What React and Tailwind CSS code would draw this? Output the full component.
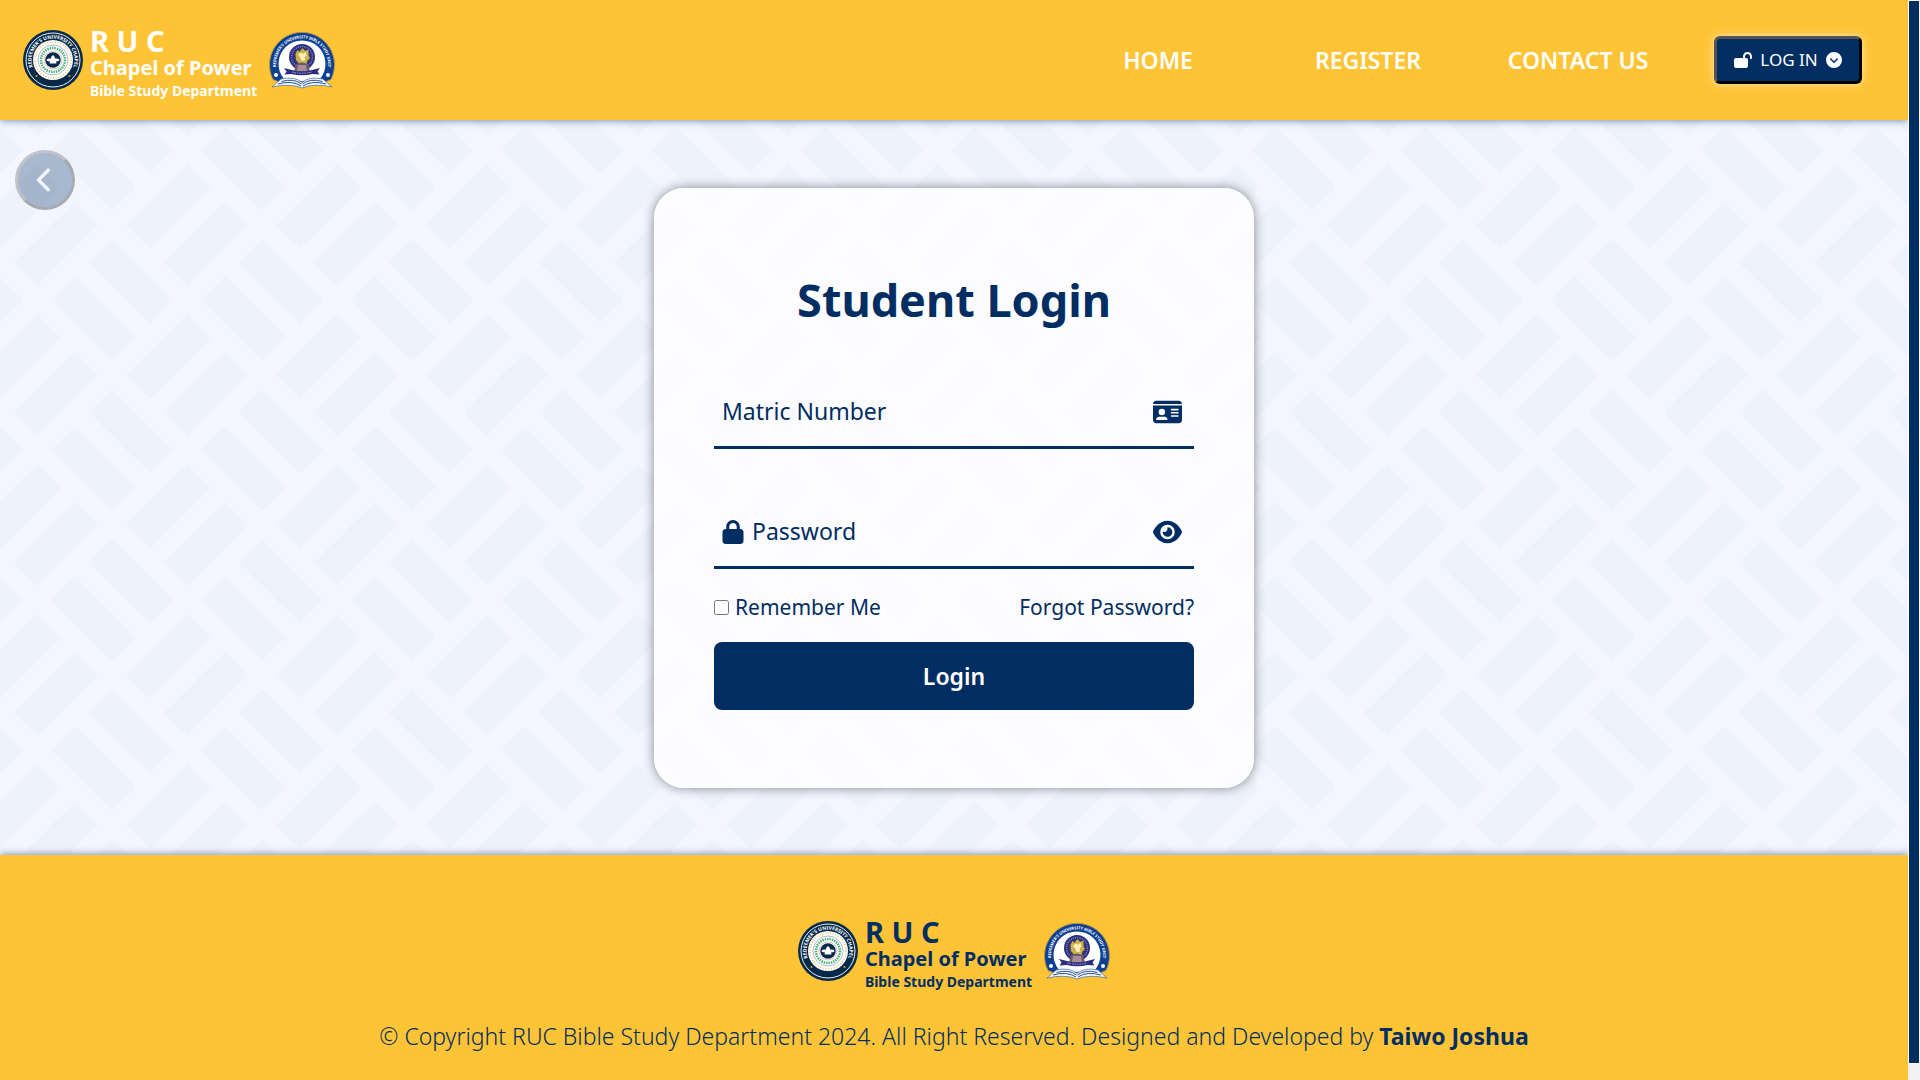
import { FaLockOpen, FaCircleChevronDown, FaChevronLeft, FaIdCard, FaLock, FaEye } from "react-icons/fa6";

const BRICKS = [
  [[75, 81.5], [98.5, 105], [37.5, 166], [13.5, 142.5]],
  [[37.5, 44], [61, 67.5], [0, 128.5], [-24, 105]],
  [[112.5, 119], [173.5, 180], [150, 203.5], [88.5, 142.5]],
  [[75, 156.5], [136, 217.5], [112.5, 241], [51, 180]],
];
const SHIFTS = [-150, 0, 150];

function BrickBackground() {
  return (
    <svg className="absolute inset-0 h-full w-full" aria-hidden="true">
      <defs>
        <pattern id="bricks" width="150" height="150" patternUnits="userSpaceOnUse">
          {BRICKS.map((pts, i) =>
            SHIFTS.map((dx) =>
              SHIFTS.map((dy) => (
                <polygon
                  key={`${i}:${dx}:${dy}`}
                  points={pts.map(([x, y]) => `${x + dx},${y + dy}`).join(" ")}
                  fill="#eef2fa"
                />
              ))
            )
          )}
        </pattern>
      </defs>
      <rect width="100%" height="100%" fill="url(#bricks)" />
    </svg>
  );
}

function ChapelSeal({ id }) {
  return (
    <svg viewBox="0 0 120 120" className="size-15 shrink-0" role="img" aria-label="Redeemer's University Chapel seal">
      <defs>
        <path id={`${id}-ring`} d="M29.6 90.4 A43 43 0 1 1 90.4 90.4" />
      </defs>
      <circle cx="60" cy="60" r="60" fill="#06294a" />
      <circle cx="60" cy="60" r="54" fill="none" stroke="#e8eef4" strokeWidth="2" />
      <circle cx="60" cy="60" r="40" fill="#fff" />
      <circle cx="60" cy="60" r="36" fill="none" stroke="#e3c66a" strokeWidth="3" strokeDasharray="2.2 3.2" />
      <circle cx="60" cy="60" r="30" fill="none" stroke="#8b98ab" strokeWidth="1.4" />
      <circle cx="60" cy="60" r="24" fill="none" stroke="#4bb47f" strokeWidth="5" strokeDasharray="3 1.8" />
      <circle cx="60" cy="60" r="18" fill="none" stroke="#d79a9c" strokeWidth="1.2" />
      <text fill="#fff" fontSize="10" fontWeight="700">
        <textPath href={`#${id}-ring`} startOffset="50%" textAnchor="middle">REDEEMER'S UNIVERSITY CHAPEL</textPath>
      </text>
      <circle cx="27" cy="92" r="2.2" fill="#c9a227" />
      <circle cx="93" cy="92" r="2.2" fill="#c9a227" />
      <circle cx="60" cy="60" r="15.5" fill="#06294a" />
      <path d="M47 61 q0 -4 5 -4 l4 0 q-1 -4 4 -7 q5 3 4 7 l4 0 q5 0 5 4 q-3 2 -7 2 l1 4 h-14 l1 -4 q-4 0 -7 -2z" fill="#fff" />
    </svg>
  );
}

function UnitCrest({ id }) {
  return (
    <svg viewBox="0 0 132 116" className="h-[58px] w-[66px] shrink-0" role="img" aria-label="Redeemer's University Bible Study Unit crest">
      <defs>
        <path id={`${id}-arc`} d="M17 84 A52 52 0 1 1 115 84" />
      </defs>
      <path d="M8 97 A65 65 0 1 1 124 97 L112 102 H20 Z" fill="#0d3f92" stroke="#b8973a" strokeWidth="2" />
      <path d="M30 96 A47 47 0 1 1 102 96 L66 100 Z" fill="#fff" />
      <text fill="#fff" fontSize="8" fontWeight="700">
        <textPath href={`#${id}-arc`} startOffset="50%" textAnchor="middle">REDEEMER'S UNIVERSITY BIBLE STUDY UNIT</textPath>
      </text>
      <circle cx="14" cy="88" r="4" fill="#fff" />
      <circle cx="118" cy="88" r="4" fill="#fff" />
      <circle cx="66" cy="52" r="26" fill="#2c2c80" />
      <circle cx="66" cy="52" r="21" fill="none" stroke="#8f8fc4" strokeWidth="3" strokeDasharray="2 2.5" />
      <circle cx="66" cy="52" r="17" fill="#3a3f66" />
      <path d="M54 58 L53 46 L57 38 L61 42 L67 34 L72 40 L79 37 L79 49 L82 54 L76 60 L76 67 L62 67 Z" fill="#cdb14a" />
      <path d="M58 47 l6 -4 4 3 5 -5 2 8 -4 4 2 6 -8 1 -2 -6z" fill="#fbf0b6" />
      <path d="M53 66 L66 63 L79 66 L82 84 H50 Z" fill="#70566b" />
      <path d="M58 68 H74 L76 80 H56 Z" fill="#a58d9c" />
      <path d="M30 74 l16 4 q20 6 40 0 l16 -4 -5 7 4 6 -14 -1 q-21 5 -42 0 l-14 1 4 -6z" fill="#2c2c80" />
      <path d="M46 82 q20 5 40 0" fill="none" stroke="#a9a9d6" strokeWidth="2" strokeDasharray="3 2" />
      <path d="M6 112 L24 96 Q52 90 66 103 Q80 90 108 96 L126 112 Q90 104 66 114 Q42 104 6 112Z" fill="#f6f9ff" stroke="#3a64a0" strokeWidth="1.4" />
      <path d="M18 106 Q46 98 64 110 M25 101 Q50 94 65 106 M114 106 Q86 98 68 110 M107 101 Q82 94 67 106" fill="none" stroke="#24518f" strokeWidth="2" />
    </svg>
  );
}

function Brand({ id }) {
  return (
    <div className="flex items-center">
      <ChapelSeal id={`${id}-seal`} />
      <div className="ml-[7px] flex flex-col pt-2 font-bold">
        <span className="text-[29px] leading-7">R U C</span>
        <span className="text-[20px] leading-[26px]">Chapel of Power</span>
        <span className="text-[14px] leading-5">Bible Study Department</span>
      </div>
      <div className="ml-3">
        <UnitCrest id={`${id}-crest`} />
      </div>
    </div>
  );
}

function Header() {
  return (
    <header className="relative z-10 flex h-30 items-center justify-between bg-[#ffc436] pr-[46px] pl-[23px] text-white shadow-[0_0_8px_rgba(0,45,98,0.6)]">
      <Brand id="top" />
      <div className="flex items-center gap-[31px]">
        <nav className="grid grid-cols-[210px_210px_210px] text-center text-[23px] font-semibold">
          <a href="#home">HOME</a>
          <a href="#register">REGISTER</a>
          <a href="#contact">CONTACT US</a>
        </nav>
        <button
          type="button"
          className="flex h-12 w-[148px] items-center justify-center gap-2 rounded-md border-[3px] border-black bg-[#002d62] text-[17px] shadow-[0_0_8px_rgba(255,255,255,0.6)] [border-style:outset]"
        >
          <FaLockOpen className="h-4 w-[18px]" />
          <span>LOG IN</span>
          <FaCircleChevronDown className="size-4" />
        </button>
      </div>
    </header>
  );
}

function LoginCard() {
  return (
    <form className="relative flex min-h-[600px] w-full max-w-[600px] flex-col rounded-[30px] bg-white/80 px-15 text-[#002d62] shadow-[0_0_12px_rgba(0,0,0,0.45)]">
      <h1 className="mt-20 text-center text-[45px] leading-16 font-bold">Student Login</h1>
      <div className="mt-[45px] flex h-18 items-center border-b-[3px] border-[#002d62] pr-3 pl-2 text-[23px]">
        <label htmlFor="matric">Matric Number</label>
        <input id="matric" type="text" className="min-w-0 flex-1 bg-transparent px-2 outline-none" />
        <FaIdCard className="h-[26px] w-[29px]" />
      </div>
      <div className="mt-12 flex h-18 items-center border-b-[3px] border-[#002d62] pr-3 pl-2 text-[23px]">
        <FaLock className="mr-2 h-6 w-[22px]" />
        <label htmlFor="password">Password</label>
        <input id="password" type="password" className="min-w-0 flex-1 bg-transparent px-2 outline-none" />
        <button type="button" aria-label="Show password">
          <FaEye className="h-[26px] w-[29px]" />
        </button>
      </div>
      <div className="mt-5 flex items-center justify-between text-[21px] leading-9">
        <label className="flex items-center gap-[6px]">
          <input type="checkbox" className="size-[15px]" />
          Remember Me
        </label>
        <a href="#forgot">Forgot Password?</a>
      </div>
      <button type="submit" className="mt-[17px] h-17 rounded-lg bg-[#002d62] text-[23px] font-semibold text-white">
        Login
      </button>
    </form>
  );
}

export default function App() {
  return (
    <div className="flex min-h-screen font-['Noto_Sans','Open_Sans',sans-serif]">
      <div className="flex min-w-0 flex-1 flex-col">
        <Header />
        <main className="relative flex justify-center bg-[#f3f6ff] pt-[68px] pb-[67px]">
          <BrickBackground />
          <button
            type="button"
            aria-label="Back"
            className="absolute top-[30px] left-[15px] flex size-15 items-center justify-center rounded-full border-[3px] border-black bg-[#002d62] text-white opacity-30 [border-style:outset]"
          >
            <FaChevronLeft className="size-[26px]" />
          </button>
          <LoginCard />
        </main>
        <footer className="relative z-10 flex flex-1 flex-col items-center bg-[#ffc436] pt-[55px] text-[#002d62] shadow-[0_0_8px_rgba(0,45,98,0.6)]">
          <Brand id="bottom" />
          <p className="mt-7 text-[23px] leading-8 font-[350]">
            © Copyright RUC Bible Study Department 2024. All Right Reserved. Designed and Developed by{" "}
            <strong className="font-bold">Taiwo Joshua</strong>
          </p>
        </footer>
      </div>
      <div className="z-20 flex w-3 flex-col bg-[#f1f1f1] pb-4" aria-hidden="true">
        <div className="flex-1 border border-white bg-[#002d62]" />
      </div>
    </div>
  );
}
